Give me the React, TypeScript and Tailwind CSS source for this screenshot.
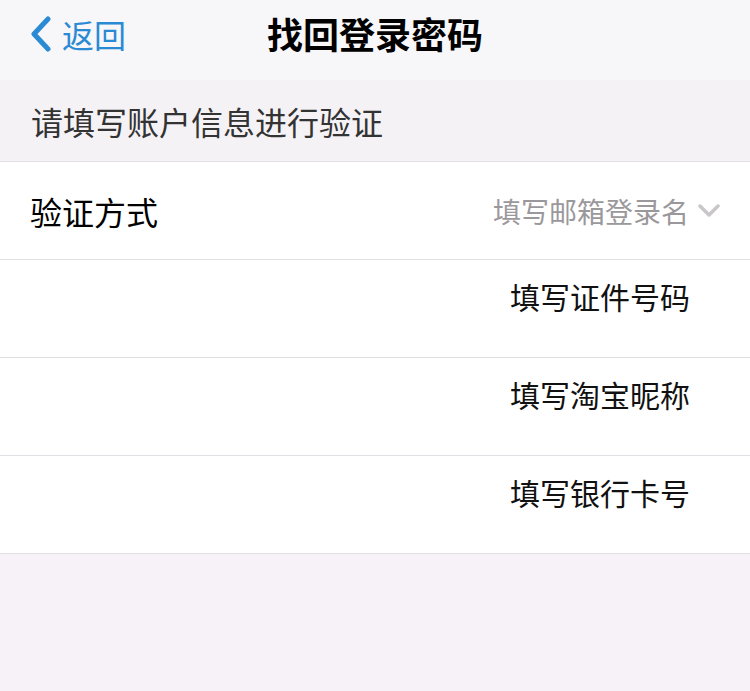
import React from 'react'

const options = ['填写证件号码', '填写淘宝昵称', '填写银行卡号']

export default function App() {
  return (
    <div
      className="w-[750px] h-[691px] bg-[#f6f2f7] overflow-hidden"
      style={{ fontFamily: '"Noto Sans CJK SC", "Noto Sans", sans-serif' }}
    >
      {/* nav bar */}
      <div className="relative h-[80px] bg-[#f7f6f8] flex items-start justify-center pt-[14px]">
        <div className="absolute left-[28px] top-[15px] flex items-center text-[#2a8ad4]">
          <svg width="26" height="36" viewBox="0 0 26 36" className="mr-[8px]">
            <path d="M20 3 L6 18 L20 33" fill="none" stroke="#2a8ad4" strokeWidth="5" strokeLinecap="round" strokeLinejoin="round" />
          </svg>
          <span className="text-[32px] leading-[38px]">返回</span>
        </div>
        <span className="text-[36px] font-bold text-black leading-[38px]">找回登录密码</span>
      </div>

      {/* section header */}
      <div className="h-[82px] flex items-center px-[31px] bg-[#f5f2f6] border-b border-[#e2dfe4]">
        <span className="text-[32px] text-[#333] leading-none">请填写账户信息进行验证</span>
      </div>

      {/* method row */}
      <div className="h-[98px] bg-white flex items-center justify-between pl-[30px] pr-[30px] border-b border-[#e2dfe4]">
        <span className="text-[32px] text-black leading-none">验证方式</span>
        <div className="flex items-center">
          <span className="text-[28px] text-[#9b989c] leading-none">填写邮箱登录名</span>
          <svg width="22" height="14" viewBox="0 0 22 14" className="ml-[9px]">
            <path d="M2 2 L11 11 L20 2" fill="none" stroke="#c8c6ca" strokeWidth="3.5" strokeLinecap="round" strokeLinejoin="round" />
          </svg>
        </div>
      </div>

      {/* option rows */}
      {options.map((o) => (
        <div key={o} className="h-[98px] bg-white flex items-start justify-end pr-[60px] pt-[19px] border-b border-[#e2dfe4]">
          <span className="text-[30px] text-[#111] leading-[34px]">{o}</span>
        </div>
      ))}
    </div>
  )
}
